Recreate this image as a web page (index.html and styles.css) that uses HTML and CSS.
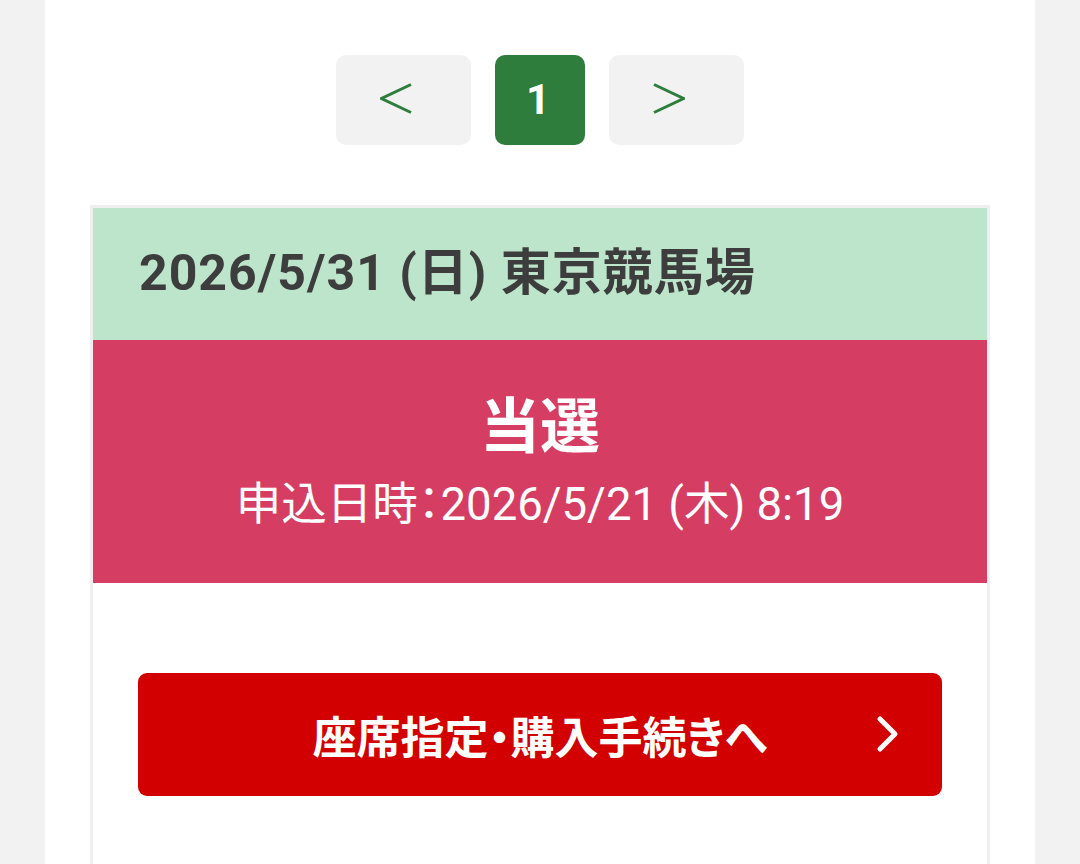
FILE: index.html
```html
<!DOCTYPE html>
<html lang="ja">
<head>
    <meta charset="UTF-8">
    <meta name="viewport" content="width=device-width, initial-scale=1.0">
    <title>申込履歴</title>
    <link rel="stylesheet" href="styles.css">
</head>
<body>
    <div class="page">
        <div class="pager">
            <a class="pager-btn pager-arrow" href="#" aria-label="前へ">
                <svg width="32" height="31" viewBox="0 0 32 31"><polyline points="31,1.5 1.5,15.5 31,29.5" fill="none" stroke="#2e7d3c" stroke-width="3"/></svg>
            </a>
            <span class="pager-btn pager-current">1</span>
            <a class="pager-btn pager-arrow" href="#" aria-label="次へ">
                <svg width="32" height="31" viewBox="0 0 32 31"><polyline points="1,1.5 30.5,15.5 1,29.5" fill="none" stroke="#2e7d3c" stroke-width="3"/></svg>
            </a>
        </div>

        <div class="card">
            <div class="card-head">2026/5/31 (日) 東京競馬場</div>

            <div class="status">
                <div class="status-title">当選</div>
                <div class="status-date">申込日時：2026/5/21 (木) 8:19</div>
            </div>

            <div class="card-body">
                <a class="buy-btn" href="#">
                    <span>座席指定・購入手続きへ</span>
                    <svg class="buy-arrow" width="24" height="38" viewBox="0 0 24 38"><polyline points="4,4 19,19 4,34" fill="none" stroke="#fff" stroke-width="5" stroke-linecap="round" stroke-linejoin="round"/></svg>
                </a>
            </div>
        </div>
    </div>
</body>
</html>
```

FILE: styles.css
```css
body {
    margin: 0;
    background-color: #f2f2f2;
    font-family: Roboto, "Noto Sans CJK JP", sans-serif;
    color: #3d3d3d;
}

.page {
    width: 990px;
    margin: 0 auto;
    min-height: 100vh;
    background: white;
    padding-top: 55px;
    box-sizing: border-box;
}

/* ページ送り */
.pager {
    display: flex;
    justify-content: center;
    gap: 24px;
}

.pager-btn {
    height: 90px;
    border-radius: 10px;
    display: flex;
    align-items: center;
    justify-content: center;
    text-decoration: none;
}

.pager-arrow {
    width: 135px;
    background-color: #f2f2f2;
    padding-right: 15px;
    padding-bottom: 4px;
    box-sizing: border-box;
}

.pager-current {
    width: 90px;
    background-color: #2e7d3c;
    color: white;
    font-size: 42px;
    font-weight: bold;
    padding-right: 4px;
    padding-bottom: 2px;
    box-sizing: border-box;
}

/* カード */
.card {
    margin: 60px 45px 0;
    border: 3px solid #efefef;
    border-bottom: none;
    min-height: 700px;
}

.card-head {
    background-color: #bce5cb;
    padding: 35px 46px 37px;
    font-size: 50px;
    line-height: 60px;
    font-weight: bold;
    letter-spacing: 1px;
    color: #3d3d3d;
}

.status {
    background-color: #d63d63;
    color: white;
    text-align: center;
    padding: 52px 0 51px;
}

.status-title {
    font-size: 60px;
    line-height: 72px;
    font-weight: bold;
}

.status-date {
    margin-top: 14px;
    font-size: 45.5px;
    line-height: 54px;
    font-feature-settings: "palt";
}

.card-body {
    padding: 90px 45px;
}

.buy-btn {
    position: relative;
    height: 123px;
    border-radius: 9px;
    background-color: #d20000;
    color: white;
    text-decoration: none;
    font-size: 44px;
    font-weight: bold;
    font-feature-settings: "palt";
    display: flex;
    align-items: center;
    justify-content: center;
}

.buy-arrow {
    position: absolute;
    right: 42px;
    top: 42px;
}
```
